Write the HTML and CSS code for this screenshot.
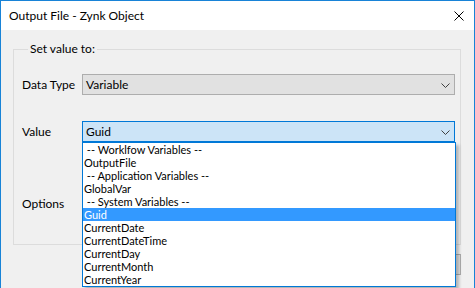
FILE: index.html
```html
<!DOCTYPE html>
<html>
<head>
<meta charset="utf-8">
<link rel="stylesheet" href="styles.css">
</head>
<body>
<div class="window">
  <div class="titlebar">
    <span class="title">Output File - Zynk Object</span>
    <svg class="close" width="10" height="10" viewBox="0 0 10 10"><path d="M0.5 0.5L9.5 9.5M9.5 0.5L0.5 9.5" stroke="#000" stroke-width="1" fill="none"/></svg>
  </div>
  <div class="client">
    <fieldset class="group">
      <legend class="legend">Set value to:</legend>
      <div class="form">
        <div class="label">Data Type</div>
        <div class="combo">
          <span class="combo-text">Variable</span>
          <svg class="chev" width="9" height="5" viewBox="0 0 9 5"><path d="M0.5 0.5L4.5 4.5L8.5 0.5" stroke="#404040" stroke-width="1" fill="none"/></svg>
        </div>
        <div class="label">Value</div>
        <div class="combo-wrap">
          <div class="combo focused">
            <span class="combo-text">Guid</span>
            <svg class="chev" width="9" height="5" viewBox="0 0 9 5"><path d="M0.5 0.5L4.5 4.5L8.5 0.5" stroke="#404040" stroke-width="1" fill="none"/></svg>
          </div>
          <ul class="droplist">
            <li class="item">&nbsp;-- Worklfow Variables --</li>
            <li class="item">OutputFile</li>
            <li class="item">&nbsp;-- Application Variables --</li>
            <li class="item">GlobalVar</li>
            <li class="item">&nbsp;-- System Variables --</li>
            <li class="item selected">Guid</li>
            <li class="item">CurrentDate</li>
            <li class="item">CurrentDateTime</li>
            <li class="item">CurrentDay</li>
            <li class="item">CurrentMonth</li>
            <li class="item">CurrentYear</li>
          </ul>
        </div>
        <div class="label options">Options</div>
        <div class="options-box"></div>
      </div>
    </fieldset>
    <div class="buttons">
      <button class="btn">OK</button>
      <button class="btn">Cancel</button>
    </div>
  </div>
</div>
</body>
</html>
```

FILE: styles.css
```css
html, body {
  margin: 0;
  padding: 0;
  background: #f0f0f0;
  overflow: hidden;
}
.window {
  width: 473px;
  height: 300px;
  border: 1px solid #1883d7;
  border-bottom: none;
  background: #f0f0f0;
  font-family: Lato, "Noto Sans", sans-serif;
  font-size: 12px;
  color: #000;
}
.titlebar {
  height: 29px;
  background: #fff;
  display: flex;
  align-items: center;
  justify-content: space-between;
  padding: 0 10px 0 8px;
}
.title {
  font-size: 12px;
}
.close {
  display: block;
}
.client {
  padding: 11px 13px 0 12px;
}
.group {
  margin: 0;
  border: 1px solid #dcdcdc;
  padding: 17px 5px 0 8px;
  height: 204px;
  box-sizing: border-box;
  min-width: 0;
}
.legend {
  padding: 0 2px;
  margin-left: 6px;
  line-height: 16px;
}
.form {
  display: grid;
  grid-template-columns: 60px 1fr;
  grid-template-rows: 21px 21px 16px;
  row-gap: 26px;
  align-items: center;
}
.form > .options {
  margin-top: 54px;
}
.combo {
  height: 21px;
  box-sizing: border-box;
  border: 1px solid #adadad;
  background: #e1e1e1;
  display: flex;
  align-items: center;
  justify-content: space-between;
  padding: 0 4px 0 3px;
}
.combo.focused {
  border-color: #0078d7;
  background: #cce4f7;
}
.combo-text {
  line-height: 19px;
}
.chev {
  display: block;
  margin-top: 1px;
}
.combo-wrap {
  position: relative;
}
.droplist {
  position: absolute;
  left: 0;
  top: 21px;
  width: 374px;
  box-sizing: border-box;
  margin: 0;
  padding: 0;
  list-style: none;
  background: #fff;
  border: 1px solid #0078d7;
  box-shadow: 3px 3px 3px rgba(0, 0, 0, 0.25);
  z-index: 5;
}
.item {
  height: 13px;
  line-height: 13px;
  font-size: 11px;
  padding-left: 1px;
  white-space: pre;
  overflow: hidden;
}
.item.selected {
  background: #3399ff;
  color: #fff;
}
.buttons {
  display: flex;
  justify-content: flex-end;
  gap: 8px;
  padding-top: 9px;
}
.btn {
  width: 75px;
  height: 21px;
  border: 1px solid #adadad;
  background: #e1e1e1;
  font: inherit;
  padding: 0;
}
```
